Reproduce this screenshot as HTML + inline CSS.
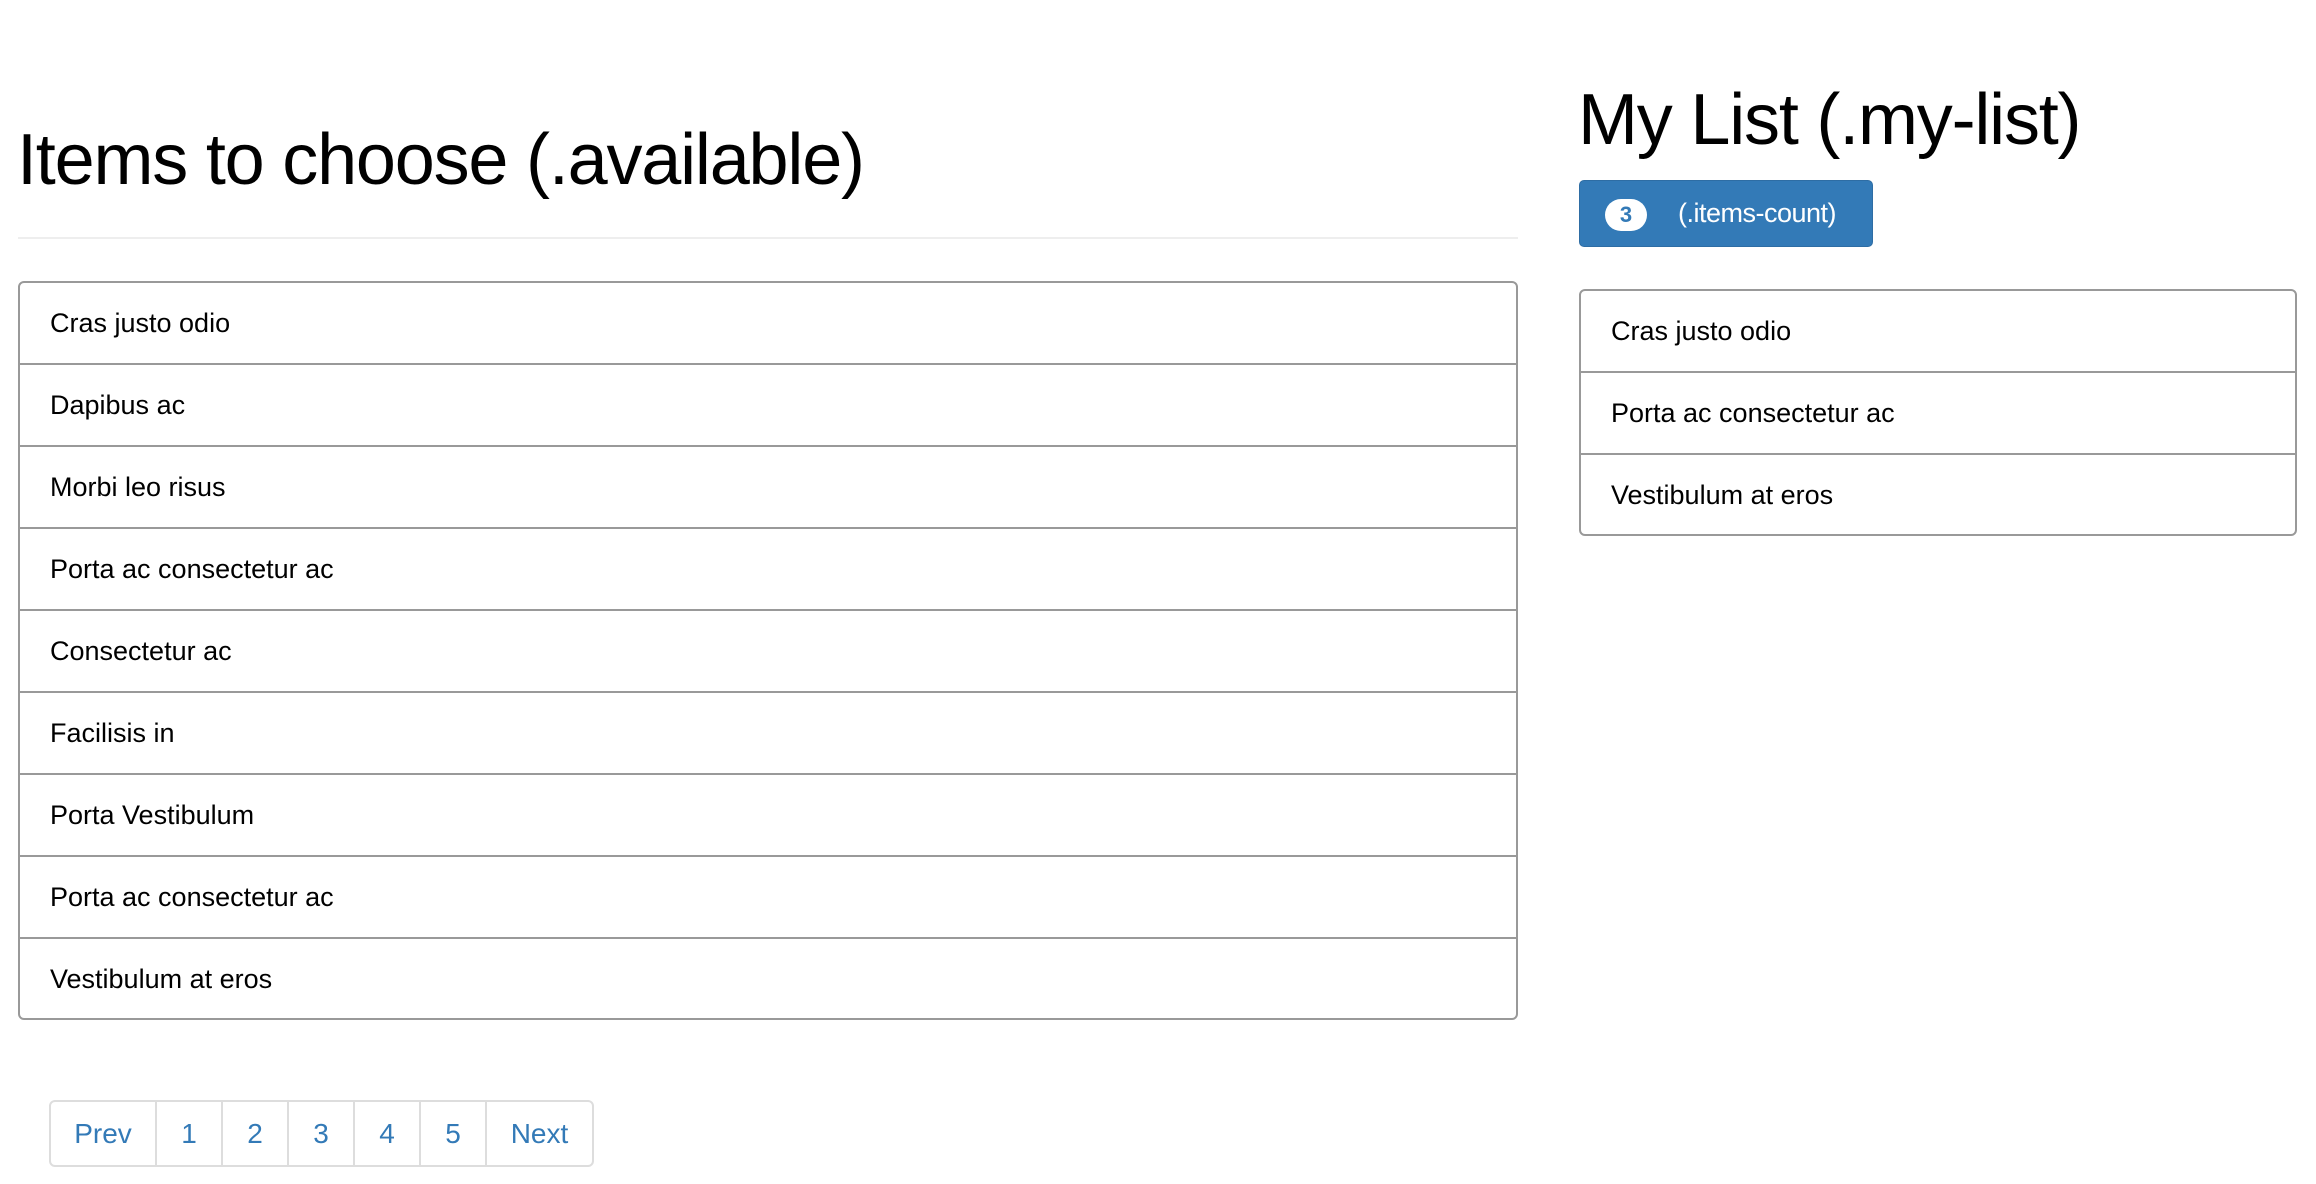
<!DOCTYPE html>
<html><head><style>
body{margin:0;width:2316px;height:1184px;background:#fff;font-family:"Liberation Sans",sans-serif;color:#000;position:relative;overflow:hidden}
.h{position:absolute;font-size:72px;line-height:1;white-space:nowrap;letter-spacing:-1.2px}
.list{position:absolute;border:2px solid #999;border-radius:6px;box-sizing:border-box}
.list div{height:82px;border-top:2px solid #999;box-sizing:border-box;font-size:27px;line-height:80px;padding-left:30px}
.list div:first-child{border-top:none;height:80px;line-height:80px}
.pg{position:absolute;left:49px;top:1100px;height:67px;display:flex;border:2px solid #ddd;border-radius:6px;box-sizing:border-box}
.pg span{border-left:2px solid #ddd;color:#337ab7;font-size:28px;display:flex;align-items:center;justify-content:center;width:64px}
.pg span:first-child{border-left:none;width:104px}
.pg span:last-child{width:105px}
</style></head><body>
<div class="h" style="left:17px;top:124px">Items to choose (.available)</div>
<div style="position:absolute;left:18px;top:237px;width:1500px;height:2px;background:#eee"></div>
<div class="list" style="left:18px;top:281px;width:1500px;height:739px">
<div>Cras justo odio</div><div>Dapibus ac</div><div>Morbi leo risus</div><div>Porta ac consectetur ac</div><div>Consectetur ac</div><div>Facilisis in</div><div>Porta Vestibulum</div><div>Porta ac consectetur ac</div><div>Vestibulum at eros</div>
</div>
<div class="pg"><span>Prev</span><span>1</span><span>2</span><span>3</span><span>4</span><span>5</span><span>Next</span></div>
<div class="h" style="left:1578px;top:84px">My List (.my-list)</div>
<div style="position:absolute;left:1579px;top:180px;width:294px;height:67px;background:#337ab7;border:1px solid #2e6da4;border-radius:5px;box-sizing:border-box">
<div style="position:absolute;left:25px;top:18px;width:42px;height:32px;border-radius:16px;background:#fff;color:#337ab7;font-size:22px;font-weight:bold;text-align:center;line-height:32px">3</div>
<div style="position:absolute;left:98px;top:0;line-height:65px;color:#fff;font-size:27px;letter-spacing:-0.5px">(.items-count)</div>
</div>
<div class="list" style="left:1579px;top:289px;width:718px;height:247px">
<div>Cras justo odio</div><div>Porta ac consectetur ac</div><div>Vestibulum at eros</div>
</div>
</body></html>
